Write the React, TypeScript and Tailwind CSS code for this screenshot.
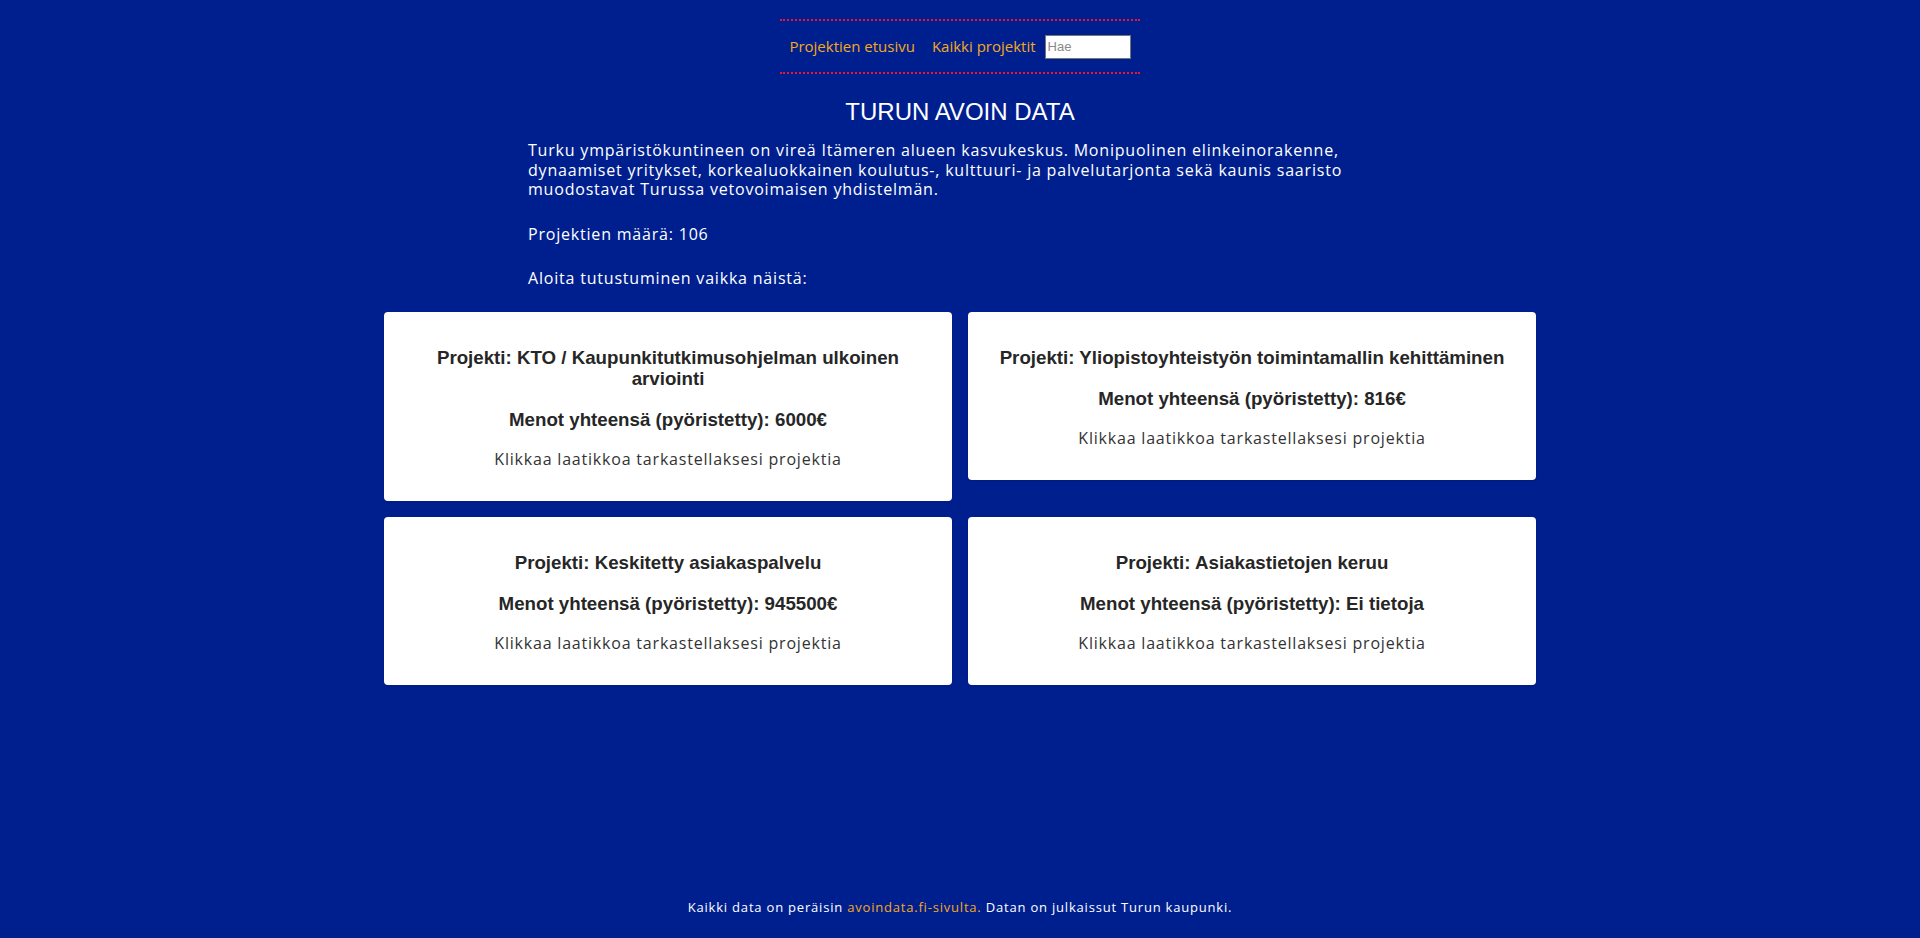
const projects = [
  { name: 'KTO / Kaupunkitutkimusohjelman ulkoinen arviointi', total: '6000€' },
  { name: 'Yliopistoyhteistyön toimintamallin kehittäminen', total: '816€' },
  { name: 'Keskitetty asiakaspalvelu', total: '945500€' },
  { name: 'Asiakastietojen keruu', total: 'Ei tietoja' },
];

const ProjectCard = ({ name, total }: { name: string; total: string }) => (
  <div className="bg-white rounded shadow-sm px-4 pt-[35px] pb-[32px] flex flex-col gap-[19.5px] text-center cursor-pointer">
    <h3 className="font-['Liberation_Sans',Arial,sans-serif] font-bold text-[18.72px] leading-[21.5px] text-[#262626]">
      Projekti: {name}
    </h3>
    <h3 className="font-['Liberation_Sans',Arial,sans-serif] font-bold text-[18.72px] leading-[21.5px] text-[#262626]">
      Menot yhteensä (pyöristetty): {total}
    </h3>
    <p className="text-[16px] leading-[19px] tracking-[0.8px] text-[#333]">Klikkaa laatikkoa tarkastellaksesi projektia</p>
  </div>
);

export default function App() {
  return (
    <div className="min-h-screen bg-[#001f8f] flex flex-col font-['Open_Sans',sans-serif] text-white">
      {/* Nav */}
      <div className="pt-[19px] flex justify-center">
        <nav className="border-y-2 border-dotted border-[#ee1438] px-[9px] h-[55px] flex items-center">
          <a href="#" className="text-[15px] text-[#f5a81c] mr-[17px]">Projektien etusivu</a>
          <a href="#" className="text-[15px] text-[#f5a81c] mr-[9px]">Kaikki projektit</a>
          <input
            type="text"
            placeholder="Hae"
            className="w-[86px] h-[24px] bg-white border border-[#767676] px-[2px] text-[13px] text-black placeholder:text-[#8a8a8a] font-['Liberation_Sans',Arial,sans-serif] outline-none"
          />
        </nav>
      </div>

      {/* Intro */}
      <h2 className="mt-[24px] text-center font-['Liberation_Sans',Arial,sans-serif] text-[24px] leading-[28px]">
        TURUN AVOIN DATA
      </h2>
      <div className="w-[864px] mx-auto mt-[15px] text-[16px] leading-[19.5px] tracking-[0.8px] flex flex-col gap-[25px]">
        <p>
          Turku ympäristökuntineen on vireä Itämeren alueen kasvukeskus. Monipuolinen elinkeinorakenne,
          dynaamiset yritykset, korkealuokkainen koulutus-, kulttuuri- ja palvelutarjonta sekä kaunis saaristo
          muodostavat Turussa vetovoimaisen yhdistelmän.
        </p>
        <p>Projektien määrä: 106</p>
        <p>Aloita tutustuminen vaikka näistä:</p>
      </div>

      {/* Cards */}
      <div className="w-[1152px] mx-auto mt-[23px] grid grid-cols-2 gap-4 items-start">
        {projects.map((p) => (
          <ProjectCard key={p.name} name={p.name} total={p.total} />
        ))}
      </div>

      {/* Footer */}
      <footer className="mt-auto pb-[22px] text-center text-[13px] leading-[18px] tracking-[0.8px]">
        Kaikki data on peräisin <a href="#" className="text-[#f5a81c]">avoindata.fi-sivulta.</a> Datan on julkaissut Turun kaupunki.
      </footer>
    </div>
  );
}
